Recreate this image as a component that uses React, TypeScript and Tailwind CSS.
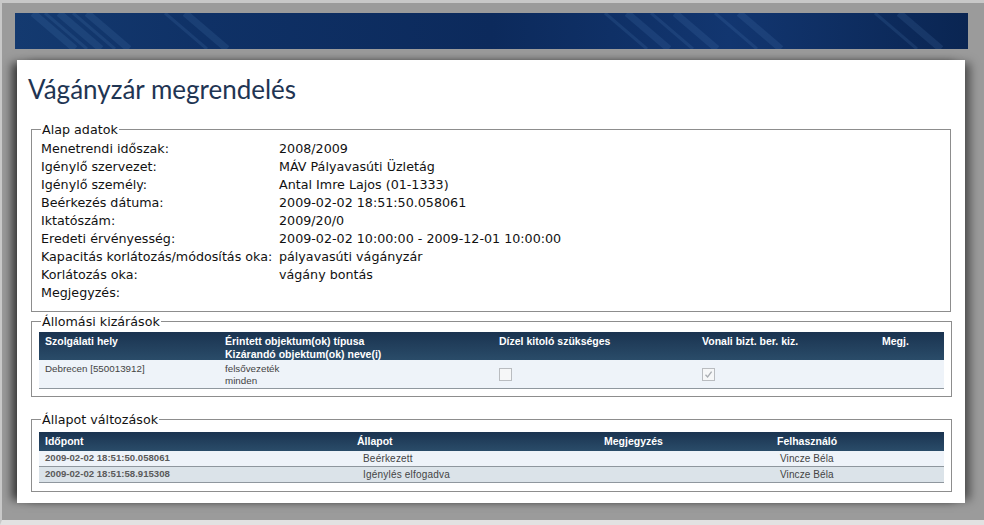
import React from "react";

const body = "font-['DejaVu_Sans',Verdana,sans-serif]";
const cell = "font-['Liberation_Sans',Arial,sans-serif]";

const details: [string, string][] = [
  ["Menetrendi időszak:", "2008/2009"],
  ["Igénylő szervezet:", "MÁV Pályavasúti Üzletág"],
  ["Igénylő személy:", "Antal Imre Lajos (01-1333)"],
  ["Beérkezés dátuma:", "2009-02-02 18:51:50.058061"],
  ["Iktatószám:", "2009/20/0"],
  ["Eredeti érvényesség:", "2009-02-02 10:00:00 - 2009-12-01 10:00:00"],
  ["Kapacitás korlátozás/módosítás oka:", "pályavasúti vágányzár"],
  ["Korlátozás oka:", "vágány bontás"],
  ["Megjegyzés:", ""],
];

const history = [
  { time: "2009-02-02 18:51:50.058061", state: "Beérkezett", user: "Vincze Béla" },
  { time: "2009-02-02 18:51:58.915308", state: "Igénylés elfogadva", user: "Vincze Béla" },
];

function Box({ checked }: { checked?: boolean }) {
  return (
    <span className="flex h-[13px] w-[13px] items-center justify-center border border-[#b9bcc0] bg-[#f6f7f8]">
      {checked && (
        <svg width="9" height="9" viewBox="0 0 9 9">
          <path d="M1.5 4.8 L3.6 7 L7.6 1.6" fill="none" stroke="#a9adb2" strokeWidth="1.3" />
        </svg>
      )}
    </span>
  );
}

function Banner() {
  return (
    <div className="relative h-[36px] overflow-hidden bg-[linear-gradient(90deg,#143a70_0%,#0f3166_20%,#0c2a5c_50%,#123670_75%,#0a2552_100%)]">
      <svg className="absolute inset-0" width="953" height="36" viewBox="0 0 953 36">
        {[18, 30, 44, 58, 72, 150, 170, 590, 612, 636, 660, 700, 724, 860, 884].map((x, i) => (
          <path
            key={i}
            d={`M${x} 0 L${x + 42} 36`}
            stroke="#5a88c0"
            strokeOpacity={0.16}
            strokeWidth={i % 2 ? 3 : 7}
          />
        ))}
      </svg>
    </div>
  );
}

export default function App() {
  return (
    <div className="h-[525px] w-[984px] overflow-hidden border-b-[5px] border-l-[2px] border-t-[3px] border-[#c8c8c8] border-b-[#e2e2e2] bg-[#9b9b9b]">
      <div className="pl-[13px] pr-[16px] pt-[10px]">
        <Banner />
      </div>
      <div className="ml-[15px] mr-[19px] mt-[11px] bg-white px-[14px] pb-[11px] pt-[12px] shadow-[-8px_0_9px_-3px_rgba(0,0,0,0.65),8px_0_9px_-3px_rgba(0,0,0,0.5)]">
        <h1 className="-ml-[3px] h-[35px] font-['Lato',sans-serif] text-[26px] font-normal leading-[35px] text-[#1f3553]">
          Vágányzár megrendelés
        </h1>

        <fieldset className={`mt-[14px] border border-[#8d8d8d] px-[9px] pb-[9px] pt-[2px] ${body} text-[12.7px] text-[#111]`}>
          <legend className="px-[1px] leading-[17px]">Alap adatok</legend>
          {details.map(([k, v]) => (
            <div key={k} className="flex h-[18px] items-center">
              <span className="w-[238px] shrink-0">{k}</span>
              <span>{v}</span>
            </div>
          ))}
        </fieldset>

        <fieldset className="mt-[1px] border border-[#8d8d8d] px-[7px] pb-[7px] pt-[2px]">
          <legend className={`ml-[2px] px-[1px] ${body} text-[12.7px] leading-[17px] text-[#111]`}>
            Állomási kizárások
          </legend>
          <div className={`${cell}`}>
            <div className="grid h-[28px] grid-cols-[179px_274px_203px_180px_69px] bg-[linear-gradient(#1a3350,#2a4c69)] pt-[3px] text-[10.5px] font-bold leading-[13px] text-white">
              <div className="pl-[6px]">Szolgálati hely</div>
              <div className="pl-[7px]">
                Érintett objektum(ok) típusa
                <br />
                Kizárandó objektum(ok) neve(i)
              </div>
              <div className="pl-[7px]">Dízel kitoló szükséges</div>
              <div className="pl-[7px]">Vonali bizt. ber. kiz.</div>
              <div className="pl-[7px]">Megj.</div>
            </div>
            <div className="grid h-[29px] grid-cols-[179px_274px_203px_180px_69px] border-b border-[#8f979e] bg-[#eef3f9] pt-[3px] text-[9.8px] leading-[12px] text-[#444]">
              <div className="pl-[6px]">Debrecen [550013912]</div>
              <div className="pl-[7px]">
                felsővezeték
                <br />
                minden
              </div>
              <div className="pl-[7px] pt-[5px]">
                <Box />
              </div>
              <div className="pl-[7px] pt-[5px]">
                <Box checked />
              </div>
              <div />
            </div>
          </div>
        </fieldset>

        <fieldset className="mt-[14px] border border-[#8d8d8d] px-[7px] pb-[8px] pt-[4px]">
          <legend className={`ml-[2px] px-[1px] ${body} text-[12.7px] leading-[17px] text-[#111]`}>
            Állapot változások
          </legend>
          <div className={`${cell}`}>
            <div className="grid h-[19px] grid-cols-[311px_247px_173px_174px] items-center bg-[linear-gradient(#1a3350,#2a4c69)] text-[10.5px] font-bold text-white">
              <div className="pl-[6px]">Időpont</div>
              <div className="pl-[7px]">Állapot</div>
              <div className="pl-[7px]">Megjegyzés</div>
              <div className="pl-[7px]">Felhasználó</div>
            </div>
            {history.map((h, i) => (
              <div
                key={h.time}
                className={`grid h-[16px] grid-cols-[311px_247px_173px_174px] items-center border-b border-[#8f979e] text-[10px] text-[#444] ${
                  i % 2 ? "bg-[#dbe3e9]" : "bg-[#eef3f9]"
                }`}
              >
                <div className="pl-[6px] text-[9.6px] font-bold text-[#5a5a5a]">{h.time}</div>
                <div className="pl-[13px] tracking-[0.2px]">{h.state}</div>
                <div />
                <div className="pl-[10px] tracking-[0.1px]">{h.user}</div>
              </div>
            ))}
          </div>
        </fieldset>
      </div>
    </div>
  );
}
